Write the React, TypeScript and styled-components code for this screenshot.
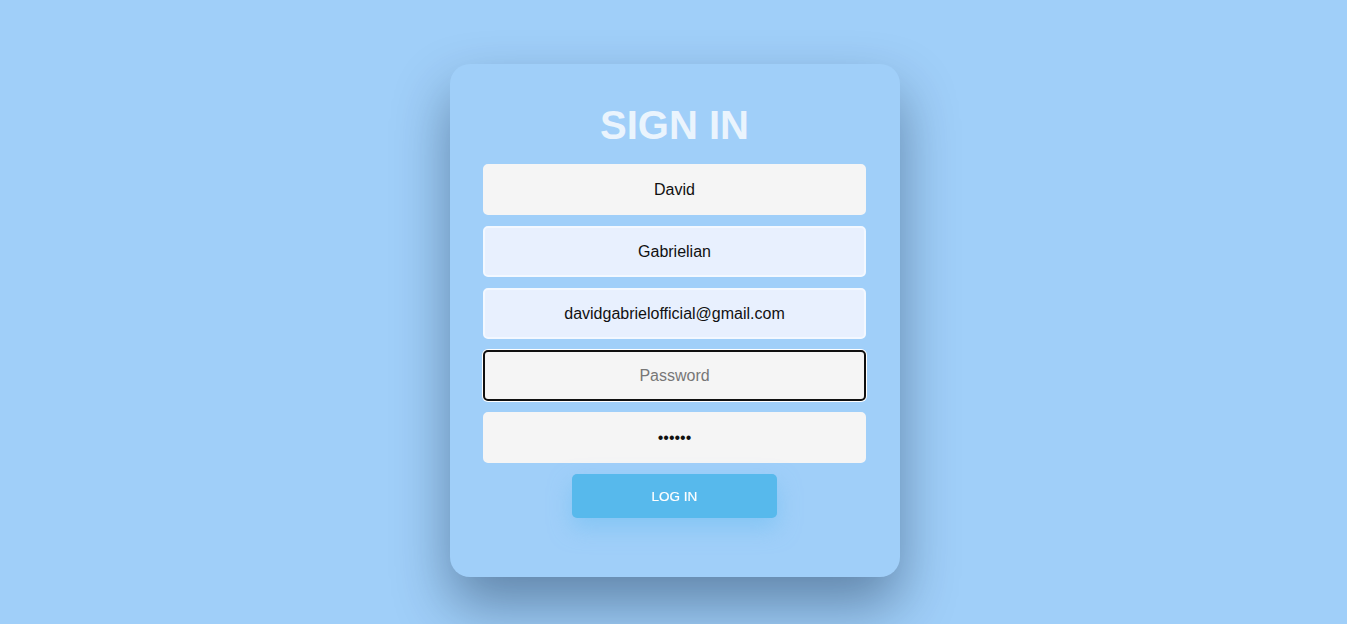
import React from "react";
import styled, { createGlobalStyle } from "styled-components";

const Global = createGlobalStyle`
  html, body {
    margin: 0;
    padding: 0;
    background: #a0cff9;
    font-family: "Liberation Sans", Arial, sans-serif;
  }
  body { min-height: 624px; overflow: hidden; }
`;

const Page = styled.main`
  display: flex;
  justify-content: center;
  padding-top: 64px;
  padding-left: 3px;
  min-height: 624px;
  box-sizing: border-box;
`;

const Card = styled.form`
  width: 450px;
  height: 513px;
  box-sizing: border-box;
  background: #a0cff9;
  border-radius: 20px;
  box-shadow: 0 28px 56px rgba(10, 30, 60, 0.42);
  padding: 38px 34px 0 33px;
  display: flex;
  flex-direction: column;
  align-items: center;
`;

const Title = styled.h1`
  margin: 0 0 16px;
  font-family: "Liberation Sans", Arial, sans-serif;
  font-size: 40px;
  font-weight: 700;
  line-height: 46px;
  color: #eaf4fd;
  text-align: center;
`;

const Field = styled.input<{ $autofill?: boolean; $focused?: boolean }>`
  width: 383px;
  height: 51px;
  box-sizing: border-box;
  margin: 0 0 11px;
  border-radius: 5px;
  border: 2px solid ${(p) => (p.$autofill ? "#f3f8ff" : "#f5f5f5")};
  background: ${(p) => (p.$autofill ? "#e8f0fe" : "#f5f5f5")};
  font-family: "Liberation Sans", Arial, sans-serif;
  font-size: 16px;
  color: #111;
  text-align: center;
  padding: 0 12px;
  outline: ${(p) => (p.$focused ? "2px solid #101010" : "none")};
  outline-offset: -2px;
  box-shadow: ${(p) => (p.$focused ? "0 0 0 1px #ffffff" : "none")};

  &:focus {
    outline: 2px solid #101010;
    outline-offset: -2px;
  }

  &::placeholder {
    color: #777;
  }
`;

const Button = styled.button`
  width: 205px;
  height: 44px;
  border: none;
  border-radius: 5px;
  background: #57b9ec;
  color: #ffffff;
  font-family: "Liberation Sans", Arial, sans-serif;
  font-size: 13.5px;
  -webkit-text-stroke: 0.2px #ffffff;
  box-shadow: 0 10px 22px rgba(110, 190, 240, 0.55);
  cursor: pointer;
`;

export default function App() {
  return (
    <>
      <Global />
      <Page>
        <Card onSubmit={(e) => e.preventDefault()}>
          <Title>SIGN IN</Title>
          <Field type="text" defaultValue="David" placeholder="First name" />
          <Field type="text" defaultValue="Gabrielian" placeholder="Last name" $autofill />
          <Field
            type="email"
            defaultValue="davidgabrielofficial@gmail.com"
            placeholder="Email"
            $autofill
          />
          <Field type="password" placeholder="Password" $focused autoFocus />
          <Field type="password" defaultValue="123456" placeholder="Confirm password" />
          <Button type="submit">LOG IN</Button>
        </Card>
      </Page>
    </>
  );
}
